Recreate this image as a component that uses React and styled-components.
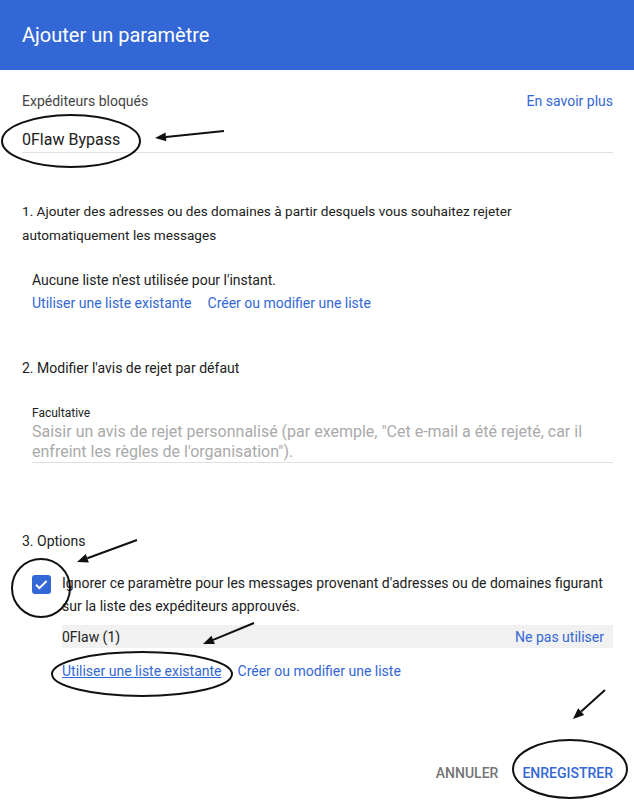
import styled, { createGlobalStyle } from 'styled-components'

const GlobalStyle = createGlobalStyle`
  body {
    margin: 0;
    background: #fff;
    font-family: Roboto, "Liberation Sans", Arial, sans-serif;
    color: #212121;
  }
`

const Page = styled.div`
  position: relative;
  width: 634px;
  height: 800px;
  overflow: hidden;
  background: #fff;
`

const Header = styled.div`
  height: 70px;
  background: #3367d6;
  display: flex;
  align-items: center;
  padding: 0 22px;
  color: #fff;
  font-size: 20px;
`

const Body = styled.div`
  padding: 0 21px 0 22px;
  font-size: 14px;
`

const LabelRow = styled.div`
  margin-top: 21px;
  display: flex;
  justify-content: space-between;
  line-height: 20px;
  color: #444;
  font-size: 14px;
`

const Link = styled.a`
  color: #3367d6;
  text-decoration: ${(p) => (p.$underline ? 'underline' : 'none')};
  cursor: pointer;
`

const NameField = styled.div`
  margin-top: 17px;
  line-height: 24px;
  font-size: 16px;
  color: #212121;
  border-bottom: 1px solid #e0e0e0;
`

const SectionTitle = styled.div`
  margin-top: ${(p) => p.$top}px;
  line-height: 24px;
  font-size: ${(p) => p.$size || 14}px;
  color: #212121;
`

const SubBlock = styled.div`
  margin-top: ${(p) => p.$top || 0}px;
  padding-left: ${(p) => p.$indent || 10}px;
  line-height: 22px;
  font-size: 14px;
`

const Links = styled.div`
  display: flex;
  gap: 16px;
  margin-top: ${(p) => p.$top || 0}px;
`

const FieldCaption = styled.div`
  margin-top: 25px;
  margin-bottom: 1px;
  padding-left: 10px;
  font-size: 12px;
  line-height: 16px;
  color: #212121;
`

const Placeholder = styled.div`
  margin-left: 10px;
  font-size: 16px;
  line-height: 20px;
  color: #aaa;
  border-bottom: 1px solid #e0e0e0;
`

const CheckRow = styled.div`
  margin-top: 19px;
  display: flex;
  align-items: flex-start;
`

const CheckBox = styled.div`
  flex: none;
  width: 19px;
  height: 19px;
  margin: 3px 11px 0 10px;
  border-radius: 3px;
  background: #3367d6;
  display: flex;
  align-items: center;
  justify-content: center;
`

const CheckText = styled.div`
  line-height: 23px;
  font-size: 14px;
  color: #212121;
`

const ListItem = styled.div`
  margin: 7px 0 0 40px;
  height: 23px;
  background: #f1f1f1;
  display: flex;
  align-items: center;
  justify-content: space-between;
  padding-right: 9px;
  font-size: 14px;
`

const Actions = styled.div`
  margin-top: 73px;
  height: 36px;
  display: flex;
  justify-content: flex-end;
  align-items: center;
  gap: 24px;
`

const Button = styled.button`
  border: none;
  background: none;
  padding: 0;
  font-family: inherit;
  font-size: 14px;
  font-weight: 500;
  text-transform: uppercase;
  color: ${(p) => (p.$primary ? '#3367d6' : '#757575')};
  cursor: pointer;
`

const Annotations = styled.svg`
  position: absolute;
  top: 0;
  left: 0;
  pointer-events: none;
`

const Arrow = ({ x1, y1, x2, y2 }) => {
  const a = Math.atan2(y2 - y1, x2 - x1)
  const len = 11
  const w = 4.5
  const bx = x2 - len * Math.cos(a)
  const by = y2 - len * Math.sin(a)
  const px = -Math.sin(a) * w
  const py = Math.cos(a) * w
  return (
    <g>
      <line x1={x1} y1={y1} x2={bx} y2={by} stroke="#111" strokeWidth="2" />
      <polygon
        points={`${x2},${y2} ${bx + px},${by + py} ${bx - px},${by - py}`}
        fill="#111"
      />
    </g>
  )
}

const App = () => {
  return (
    <Page>
      <GlobalStyle />
      <Header>Ajouter un paramètre</Header>
      <Body>
        <LabelRow>
          <span>Expéditeurs bloqués</span>
          <Link>En savoir plus</Link>
        </LabelRow>
        <NameField>0Flaw Bypass</NameField>

        <SectionTitle $top={46} $size={13.6}>
          1. Ajouter des adresses ou des domaines à partir desquels vous souhaitez rejeter
          automatiquement les messages
        </SectionTitle>
        <SubBlock $top={22}>
          <div>Aucune liste n'est utilisée pour l'instant.</div>
          <Links $top={1}>
            <Link>Utiliser une liste existante</Link>
            <Link>Créer ou modifier une liste</Link>
          </Links>
        </SubBlock>

        <SectionTitle $top={42}>2. Modifier l'avis de rejet par défaut</SectionTitle>
        <FieldCaption>Facultative</FieldCaption>
        <Placeholder>
          Saisir un avis de rejet personnalisé (par exemple, "Cet e-mail a été rejeté, car il
          enfreint les règles de l'organisation").
        </Placeholder>

        <SectionTitle $top={66}>3. Options</SectionTitle>
        <CheckRow>
          <CheckBox>
            <svg width="19" height="19" viewBox="0 0 19 19">
              <path d="M4 9.8l3.4 3.4 7.2-7.2" fill="none" stroke="#fff" strokeWidth="2" />
            </svg>
          </CheckBox>
          <CheckText>
            Ignorer ce paramètre pour les messages provenant d'adresses ou de domaines figurant
            sur la liste des expéditeurs approuvés.
          </CheckText>
        </CheckRow>
        <ListItem>
          <span>0Flaw (1)</span>
          <Link>Ne pas utiliser</Link>
        </ListItem>
        <SubBlock $top={12} $indent={40}>
          <Links>
            <Link $underline>Utiliser une liste existante</Link>
            <Link>Créer ou modifier une liste</Link>
          </Links>
        </SubBlock>

        <Actions>
          <Button>Annuler</Button>
          <Button $primary>Enregistrer</Button>
        </Actions>
      </Body>

      <Annotations width="634" height="800" viewBox="0 0 634 800">
        <g fill="none" stroke="#111" strokeWidth="2">
          <ellipse cx="71" cy="141" rx="69" ry="26" />
          <ellipse cx="41" cy="588" rx="29" ry="29" />
          <ellipse cx="142" cy="674" rx="90" ry="22" />
          <ellipse cx="570" cy="769" rx="57" ry="29" />
        </g>
        <Arrow x1={224} y1={131} x2={155} y2={138} />
        <Arrow x1={137} y1={540} x2={77} y2={562} />
        <Arrow x1={254} y1={623} x2={203} y2={644} />
        <Arrow x1={605} y1={690} x2={573} y2={719} />
      </Annotations>
    </Page>
  )
}

export default App
